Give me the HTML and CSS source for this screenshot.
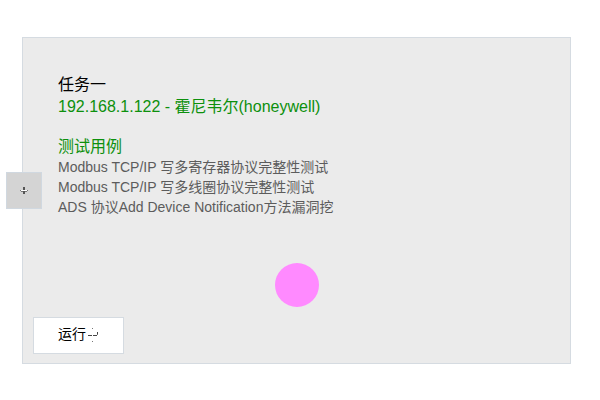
FILE: index.html
```html
<!DOCTYPE html>
<html lang="zh-CN">
<head>
<meta charset="utf-8">
<title>任务一</title>
<link rel="stylesheet" href="styles.css">
</head>
<body>
<main class="panel">
  <button class="toggle" type="button" aria-label="展开">
    <svg width="8" height="8" viewBox="0 0 8 8" shape-rendering="crispEdges" aria-hidden="true">
      <path fill="#fff" d="M1 3h6v1H1z"/>
      <path fill="#555" d="M3 0h2v3H3zM3 4h2v3H3z"/>
      <path fill="#777" d="M0 3h1v1H0zM7 3h1v1H7zM1 4h2v1H1zM5 4h2v1H5z"/>
    </svg>
  </button>
  <section class="details">
    <h1 class="title">任务一</h1>
    <p class="device">192.168.1.122 - 霍尼韦尔(honeywell)</p>
    <h2 class="heading">测试用例</h2>
    <ul class="cases">
      <li>Modbus TCP/IP 写多寄存器协议完整性测试</li>
      <li>Modbus TCP/IP 写多线圈协议完整性测试</li>
      <li>ADS 协议Add Device Notification方法漏洞挖</li>
    </ul>
  </section>
  <div class="status"></div>
  <button class="run" type="button">
    <span>运行</span>
    <svg width="13" height="14" viewBox="0 0 13 14" shape-rendering="crispEdges" aria-hidden="true">
      <path fill="#444" d="M2 7h4v1H2zM7 7h4v1H7zM11 4h1v2h-1z"/>
      <path fill="#777" d="M11 6h1v1h-1zM6 0h1v1H6zM6 13h1v1H6z"/>
    </svg>
  </button>
</main>
</body>
</html>
```
FILE: styles.css
```css
* {
  box-sizing: border-box;
}

body {
  margin: 0;
  padding: 37px 29px 36px 22px;
  background: #fff;
  color: #000;
  font-family: "Liberation Sans", "Noto Sans CJK SC", sans-serif;
  font-size: 16px;
  line-height: 22px;
}

.panel {
  position: relative;
  padding: 36px 10px 9px;
  border: 1px solid #d5dbe1;
  background: #ebebeb;
}

.toggle {
  position: absolute;
  top: 134px;
  left: -17px;
  display: flex;
  align-items: center;
  justify-content: center;
  width: 36px;
  height: 37px;
  padding: 0;
  border: 1px solid #d0d8e0;
  background: #d4d4d4;
}

.details {
  padding: 0 25px;
}

.title,
.heading,
.device {
  margin: 0;
  font-size: 16px;
  font-weight: 400;
}

.device,
.heading {
  color: #0d900d;
}

.heading {
  margin-top: 19px;
  line-height: 20px;
}

.cases {
  margin: 0;
  padding: 0;
  list-style: none;
  color: #5c5c5c;
  font-size: 14px;
  line-height: 20px;
}

.status {
  width: 44px;
  height: 44px;
  margin: 46px auto 10px;
  border-radius: 50%;
  background: #ff8aff;
}

.run {
  display: flex;
  align-items: center;
  padding: 6px 24px 8px;
  border: 1px solid #d5dbe1;
  background: #fff;
  color: #000;
  font-family: inherit;
  font-size: 14px;
  line-height: 21px;
}
```
